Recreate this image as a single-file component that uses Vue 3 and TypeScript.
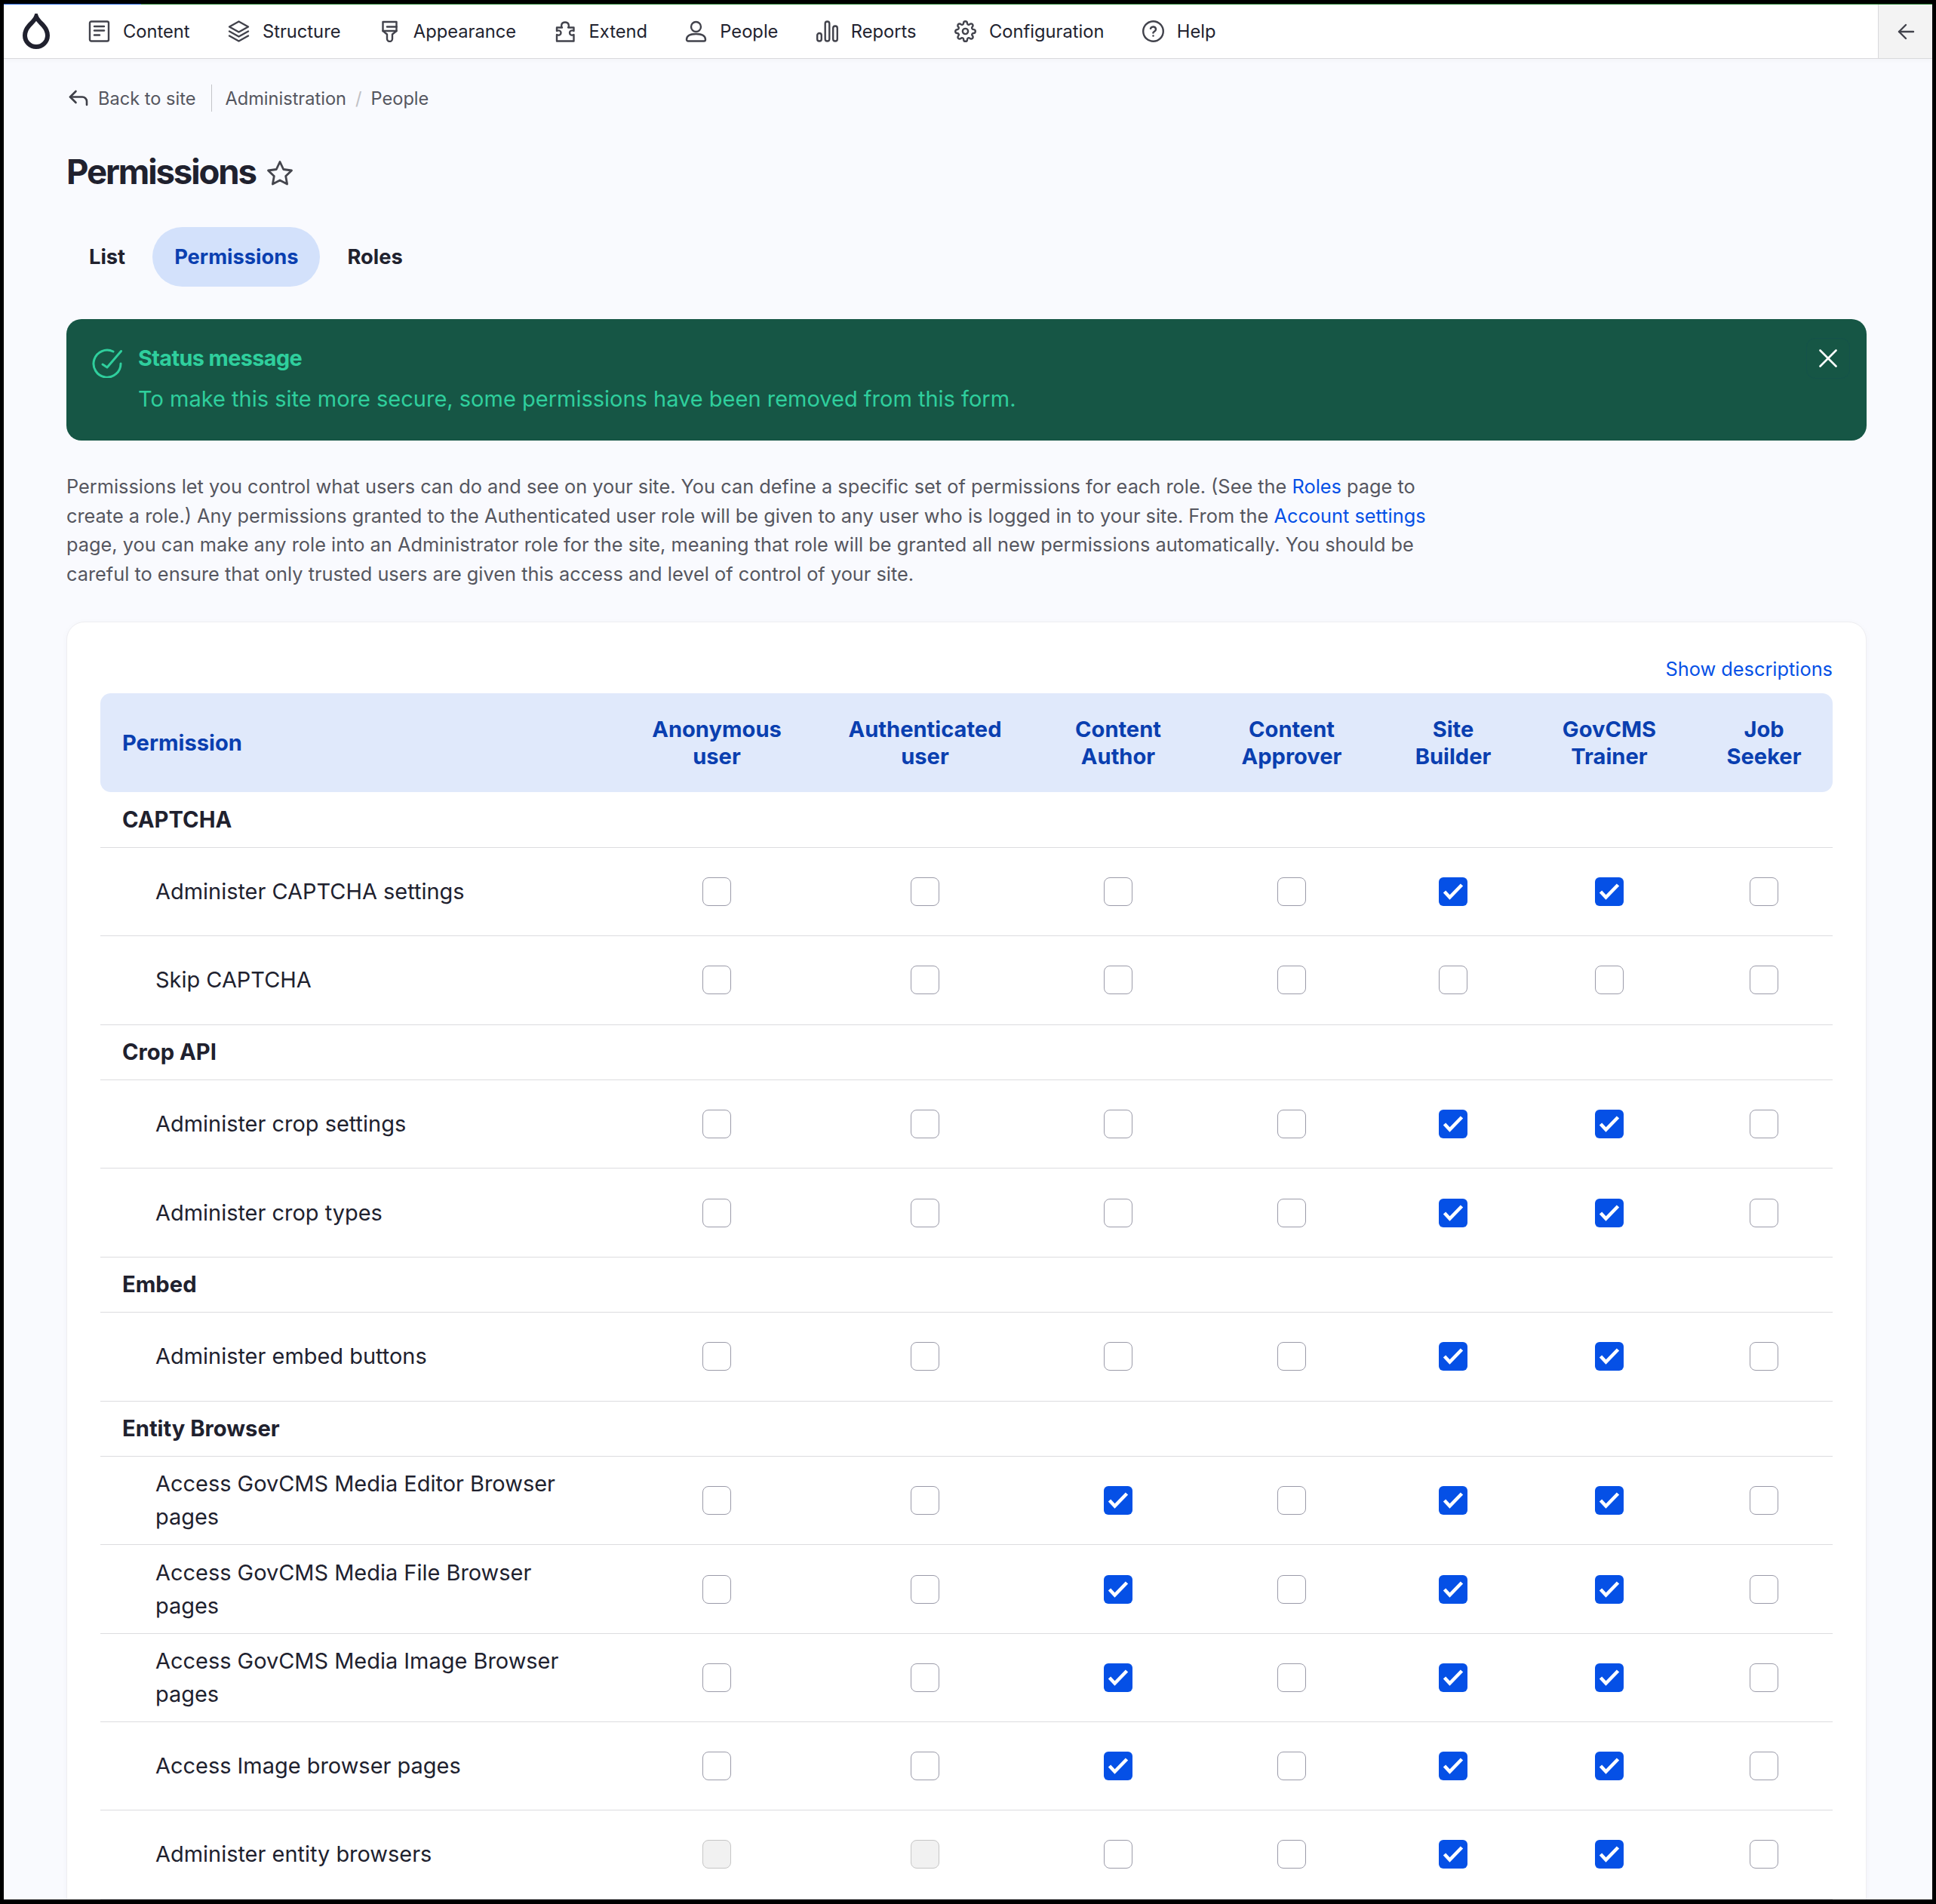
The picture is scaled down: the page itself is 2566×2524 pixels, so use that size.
<script setup lang="ts">
interface NavItem { label: string; paths: string[]; box?: string; circles?: number[][]; rects?: number[][] }
const nav: NavItem[] = [
  { label: 'Content', paths: ['M8 8h13', 'M8 13.5h13', 'M8 19.5h7'], rects: [[2, 1.5, 25, 26, 2]] },
  { label: 'Structure', paths: ['M14.5 1.5 27 8.5 14.5 15.5 2 8.5Z', 'M2 14.5 14.5 21.5 27 14.5', 'M2 20.5 14.5 27.5 27 20.5'] },
  { label: 'Appearance', paths: ['M5.5 2H23.5V14L18 18.5V24.5A3.5 3.5 0 0 1 11 24.5V18.5L5.5 14Z', 'M23.5 8.5H11', 'M5.5 14H23.5'] },
  { label: 'Extend', paths: ['M10 9.5C8.5 8 8.5 2.5 14 2.5S19.5 8 18 9.5H25.5V14C22.5 12.5 20 14 20 16.5S22.5 20.5 25.5 19V27.5H3V19C6 20.5 8.5 19 8.5 16.5S6 12.5 3 14V9.5Z'] },
  { label: 'People', paths: ['M2 25.5C2 20.5 7 18 14.5 18S27 20.5 27 25.5C27 26.7 26 27.5 25 27.5H4C3 27.5 2 26.7 2 25.5Z'], circles: [[14.5, 8.5, 6.5]] },
  { label: 'Reports', paths: [], rects: [[1.2, 17, 5.6, 10.5, 2.8], [11.7, 1.5, 5.6, 26, 2.8], [22.2, 7.5, 5.6, 20, 2.8]] },
  { label: 'Configuration', box: '0 0 24 24', paths: ['M19.4 15a1.65 1.65 0 0 0 .33 1.82l.06.06a2 2 0 0 1 0 2.83 2 2 0 0 1-2.83 0l-.06-.06a1.65 1.65 0 0 0-1.82-.33 1.65 1.65 0 0 0-1 1.51V21a2 2 0 0 1-2 2 2 2 0 0 1-2-2v-.09A1.65 1.65 0 0 0 9 19.4a1.65 1.65 0 0 0-1.82.33l-.06.06a2 2 0 0 1-2.83 0 2 2 0 0 1 0-2.83l.06-.06a1.65 1.65 0 0 0 .33-1.82 1.65 1.65 0 0 0-1.51-1H3a2 2 0 0 1-2-2 2 2 0 0 1 2-2h.09A1.65 1.65 0 0 0 4.6 9a1.65 1.65 0 0 0-.33-1.82l-.06-.06a2 2 0 0 1 0-2.83 2 2 0 0 1 2.83 0l.06.06a1.65 1.65 0 0 0 1.82.33H9a1.65 1.65 0 0 0 1-1.51V3a2 2 0 0 1 2-2 2 2 0 0 1 2 2v.09a1.65 1.65 0 0 0 1 1.51 1.65 1.65 0 0 0 1.82-.33l.06-.06a2 2 0 0 1 2.83 0 2 2 0 0 1 0 2.83l-.06.06a1.65 1.65 0 0 0-.33 1.82V9a1.65 1.65 0 0 0 1.51 1H21a2 2 0 0 1 2 2 2 2 0 0 1-2 2h-.09a1.65 1.65 0 0 0-1.51 1z'], circles: [[12, 12, 3]] },
  { label: 'Help', box: '0 0 24 24', paths: ['M9.09 9a3 3 0 0 1 5.83 1c0 2-3 2.6-3 3.6', 'M12 17h.01'], circles: [[12, 12, 11]] },
]

const columns: string[][] = [
  ['Anonymous', 'user'], ['Authenticated', 'user'], ['Content', 'Author'], ['Content', 'Approver'],
  ['Site', 'Builder'], ['GovCMS', 'Trainer'], ['Job', 'Seeker'],
]

// 0 = empty, 1 = checked, 2 = disabled
type Row = { group: string } | { label: string; v: number[] }
const B = [0, 0, 0, 0, 1, 1, 0]
const M = [0, 0, 1, 0, 1, 1, 0]
const rows: Row[] = [
  { group: 'CAPTCHA' },
  { label: 'Administer CAPTCHA settings', v: B },
  { label: 'Skip CAPTCHA', v: [0, 0, 0, 0, 0, 0, 0] },
  { group: 'Crop API' },
  { label: 'Administer crop settings', v: B },
  { label: 'Administer crop types', v: B },
  { group: 'Embed' },
  { label: 'Administer embed buttons', v: B },
  { group: 'Entity Browser' },
  { label: 'Access GovCMS Media Editor Browser pages', v: M },
  { label: 'Access GovCMS Media File Browser pages', v: M },
  { label: 'Access GovCMS Media Image Browser pages', v: M },
  { label: 'Access Image browser pages', v: M },
  { label: 'Administer entity browsers', v: [2, 2, 0, 0, 1, 1, 0] },
]
const colWidths = [688, 258, 294, 218, 242, 186, 228, 182]
</script>

<template>
  <div class="frame">
    <div class="progress"><span></span></div>
    <header class="toolbar">
      <div class="logo">
        <svg width="36" height="47" viewBox="0 0 36 47" fill="none">
          <path d="M18 4C20 9 24 12 27.5 16C31 20 33 24 33 29A15 15 0 0 1 3 29C3 24 5 20 8.5 16C12 12 16 9 18 4Z" stroke="#20212e" stroke-width="6" />
        </svg>
      </div>
      <nav class="nav">
        <a v-for="item in nav" :key="item.label" class="nav-item">
          <svg width="29" height="29" :viewBox="item.box || '0 0 29 29'" fill="none" stroke="#42434c" :stroke-width="item.box ? 2 : 2.4" stroke-linecap="round" stroke-linejoin="round">
            <rect v-for="(r, i) in item.rects || []" :key="'r' + i" :x="r[0]" :y="r[1]" :width="r[2]" :height="r[3]" :rx="r[4]" />
            <circle v-for="(c, i) in item.circles || []" :key="'c' + i" :cx="c[0]" :cy="c[1]" :r="c[2]" />
            <path v-for="(d, i) in item.paths" :key="'p' + i" :d="d" />
          </svg>
          <span>{{ item.label }}</span>
        </a>
      </nav>
      <button class="toggle" type="button" aria-label="Collapse">
        <svg width="24" height="24" viewBox="0 0 24 24" fill="none" stroke="#42434c" stroke-width="2.4" stroke-linecap="round" stroke-linejoin="round">
          <path d="M22 12H3" /><path d="M12 3 3 12 12 21" />
        </svg>
      </button>
    </header>

    <main class="main">
      <div class="crumbs">
        <a class="back">
          <svg width="26" height="22" viewBox="0 0 26 22" fill="none" stroke="#3f4049" stroke-width="2.6" stroke-linecap="round" stroke-linejoin="round">
            <path d="M9.5 2 2 9.5 9.5 17" /><path d="M2 9.5H18A6 6 0 0 1 24 15.5V20" />
          </svg>
          <span>Back to site</span>
        </a>
        <span class="divider"></span>
        <a>Administration</a>
        <span class="slash">/</span>
        <a>People</a>
      </div>

      <div class="title-row">
        <h1>Permissions</h1>
        <svg class="star" width="36" height="34" viewBox="0 0 36 34" fill="none" stroke="#44454d" stroke-width="2.8" stroke-linejoin="round">
          <path d="M18 2.5 22.7 12.5 33.5 14 25.7 21.5 27.6 32 18 27 8.4 32 10.3 21.5 2.5 14 13.3 12.5Z" />
        </svg>
      </div>

      <div class="tabs">
        <a class="tab">List</a>
        <a class="tab active">Permissions</a>
        <a class="tab">Roles</a>
      </div>

      <section class="status">
        <svg class="status-icon" width="40" height="40" viewBox="0 0 40 40" fill="none" stroke="#2fcf9d" stroke-width="3" stroke-linecap="round" stroke-linejoin="round">
          <path d="M28 5A18 18 0 1 0 38 21" /><path d="M14 22 20 26 38.5 4.5" />
        </svg>
        <div class="status-body">
          <h2>Status message</h2>
          <p>To make this site more secure, some permissions have been removed from this form.</p>
        </div>
        <button class="close" type="button" aria-label="Dismiss">
          <svg width="24" height="24" viewBox="0 0 24 24" fill="none" stroke="#fff" stroke-width="2.6" stroke-linecap="round">
            <path d="M1.5 1.5 22.5 22.5" /><path d="M22.5 1.5 1.5 22.5" />
          </svg>
        </button>
      </section>

      <p class="intro">
        Permissions let you control what users can do and see on your site. You can define a specific set of permissions for each role. (See the <a>Roles</a> page to create a role.) Any permissions granted to the Authenticated user role will be given to any user who is logged in to your site. From the <a>Account settings</a> page, you can make any role into an Administrator role for the site, meaning that role will be granted all new permissions automatically. You should be careful to ensure that only trusted users are given this access and level of control of your site.
      </p>

      <section class="card">
        <div class="show"><a>Show descriptions</a></div>
        <table class="perm">
          <colgroup>
            <col v-for="(w, i) in colWidths" :key="i" :style="{ width: w + 'px' }" />
          </colgroup>
          <thead>
            <tr>
              <th class="first">Permission</th>
              <th v-for="(c, i) in columns" :key="i" class="role">{{ c[0] }}<br />{{ c[1] }}</th>
            </tr>
          </thead>
          <tbody>
            <template v-for="(r, i) in rows" :key="i">
              <tr v-if="'group' in r" class="group">
                <td colspan="8">{{ r.group }}</td>
              </tr>
              <tr v-else class="item">
                <td class="name">{{ r.label }}</td>
                <td v-for="(s, j) in r.v" :key="j" class="check-cell">
                  <span class="check" :class="{ on: s === 1, off: s === 2 }">
                    <svg v-if="s === 1" width="38" height="38" viewBox="0 0 38 38" fill="none" stroke="#fff" stroke-width="4.6">
                      <path d="M7.5 19 14.5 26.5 30.5 10" />
                    </svg>
                  </span>
                </td>
              </tr>
            </template>
          </tbody>
        </table>
      </section>
    </main>
  </div>
</template>

<style>
html, body { margin: 0; background: #000; }
</style>

<style scoped>
.frame {
  box-sizing: border-box;
  height: 2524px;
  width: 2566px;
  border: solid #000;
  border-width: 5px 5px 6px 5px;
  overflow: hidden;
  background: #f9fafe;
  font-family: Inter, "Noto Sans", sans-serif;
  color: #20212e;
}
.progress { height: 1px; background: #1c7a2c; }
.progress span { display: block; width: 182px; height: 1px; background: #1b5fd6; }
.toolbar {
  display: flex;
  align-items: stretch;
  height: 71px;
  background: #fff;
  border-bottom: 1px solid #d9d9dc;
  box-shadow: 0 2px 6px rgba(0, 0, 0, .03);
}
.logo { width: 112px; display: flex; align-items: center; padding: 0 0 0 25px; box-sizing: border-box; }
.nav { flex: 1; display: flex; align-items: center; gap: 50.4px; }
.nav-item { display: flex; align-items: center; gap: 17px; font-size: 23.7px; color: #22232f; }
.toggle {
  width: 72px;
  padding: 0;
  border: 0;
  border-left: 1px solid #d9d9dc;
  background: #f3f3f3;
  display: flex;
  align-items: center;
  justify-content: center;
}
.main { padding: 0 87px 0 83px; }
.crumbs {
  margin-top: 34px;
  height: 36px;
  display: flex;
  align-items: center;
  font-size: 23.6px;
  color: #55565f;
}
.back { display: flex; align-items: center; gap: 13px; margin-left: 3px; }
.divider { width: 1px; height: 36px; background: #c4c4c8; margin: 0 17px 0 21px; }
.slash { color: #c0c0c4; margin: 0 12px; }
.title-row { margin-top: 53px; height: 54px; display: flex; align-items: center; gap: 14px; }
.star { margin-top: 2px; }
h1 { margin: 0; font-size: 45.5px; font-weight: 700; line-height: 54px; letter-spacing: -2.1px; color: #20212e; }
.tabs { margin-top: 46px; display: flex; gap: 7px; margin-left: 1px; }
.tab {
  height: 79px;
  padding: 0 29px;
  border-radius: 40px;
  display: flex;
  align-items: center;
  font-size: 27.3px;
  font-weight: 700;
  color: #20212e;
}
.tab.active { background: #d3e1fb; color: #0a3fb0; }
.status {
  margin-top: 43px;
  height: 161px;
  box-sizing: border-box;
  background: #165645;
  border-radius: 20px;
  display: flex;
  align-items: flex-start;
  padding: 25px 22px 0 34px;
  color: #2fcf9d;
}
.status-icon { margin-top: 13px; flex: none; }
.status-body { flex: 1; margin-left: 21px; }
.status-body h2 { margin: 0; font-size: 28.8px; font-weight: 700; line-height: 54px; letter-spacing: -.6px; height: 54px; }
.status-body p { margin: 0; font-size: 29px; line-height: 54px; }
.close {
  width: 58px;
  height: 54px;
  margin-top: 0;
  padding: 0;
  border: 1px solid #14524a;
  border-radius: 12px;
  background: transparent;
  display: flex;
  align-items: center;
  justify-content: center;
}
.intro {
  margin: 42px 0 0;
  max-width: 1825px;
  font-size: 25.35px;
  line-height: 38.6px;
  color: #55565f;
}
.intro a { color: #0550e6; }
.card {
  margin-top: 44px;
  background: #fff;
  border: 1px solid #eeeef1;
  border-radius: 24px;
  padding: 0 44px 60px;
  box-shadow: 0 2px 10px rgba(30, 40, 90, .03);
}
.show { margin-top: 43px; height: 38px; line-height: 38px; text-align: right; font-size: 25.35px; color: #0550e6; margin-bottom: 13px; }
.perm { width: 2296px; table-layout: fixed; border-collapse: separate; border-spacing: 0; }
thead tr { height: 131px; }
th {
  background: #e0e9fb;
  color: #0a3fb0;
  font-size: 29.1px;
  font-weight: 700;
  line-height: 36px;
  padding: 0;
}
th.first { text-align: left; padding-left: 29px; border-radius: 14px 0 0 14px; }
th:last-child { border-radius: 0 14px 14px 0; }
.group { height: 73.5px; }
.group td { padding: 0 0 0 29px; font-size: 29.2px; font-weight: 700; border-bottom: 1px solid #dcdcdf; }
.item { height: 117.33px; }
.item td { padding: 0; border-bottom: 1px solid #dcdcdf; }
.item .name { padding: 0 29px 0 73px; font-size: 28.95px; line-height: 44px; color: #20212e; }
.check-cell { text-align: center; vertical-align: middle; }
.check {
  display: inline-block;
  box-sizing: border-box;
  width: 38px;
  height: 38px;
  border: 1.6px solid #9b9ba9;
  border-radius: 8px;
  background: #fff;
  vertical-align: middle;
}
.check.on { border: 0; background: #0550e6; border-radius: 6px; }
.check.on svg { display: block; }
.check.off { background: #f1f1f1; border-color: #c6c6c6; }
</style>
